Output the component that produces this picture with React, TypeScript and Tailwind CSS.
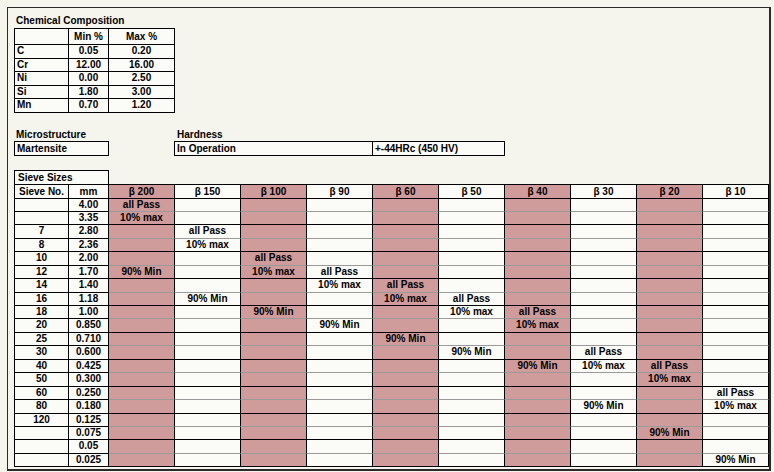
import React from 'react';

const betaCols = ['β 200', 'β 150', 'β 100', 'β 90', 'β 60', 'β 50', 'β 40', 'β 30', 'β 20', 'β 10'];

const sieveRows: [string, string][] = [
  ['', '4.00'], ['', '3.35'], ['7', '2.80'], ['8', '2.36'], ['10', '2.00'],
  ['12', '1.70'], ['14', '1.40'], ['16', '1.18'], ['18', '1.00'], ['20', '0.850'],
  ['25', '0.710'], ['30', '0.600'], ['40', '0.425'], ['50', '0.300'], ['60', '0.250'],
  ['80', '0.180'], ['120', '0.125'], ['', '0.075'], ['', '0.05'], ['', '0.025'],
];

// [allPass row, 10% max row, 90% min row] for each beta column
const passRows: [number, number, number][] = [
  [0, 1, 5], [2, 3, 7], [4, 5, 8], [5, 6, 9], [6, 7, 10],
  [7, 8, 11], [8, 9, 12], [11, 12, 15], [12, 13, 17], [14, 15, 19],
];

const composition = [
  ['C', '0.05', '0.20'],
  ['Cr', '12.00', '16.00'],
  ['Ni', '0.00', '2.50'],
  ['Si', '1.80', '3.00'],
  ['Mn', '0.70', '1.20'],
];

function cellText(col: number, row: number) {
  const [a, b, c] = passRows[col];
  if (row === a) return 'all Pass';
  if (row === b) return '10% max';
  if (row === c) return '90% Min';
  return '';
}

export default function App() {
  return (
    <div className="w-[774px] h-[472px] overflow-hidden bg-[#f5f5ee] font-['Liberation_Sans',Arial,sans-serif] text-[10px] font-bold text-black">
      <div className="ml-[7px] mt-[7px] w-[764px] h-[464px] border-l border-t border-r-2 border-b-2 border-[#2a2a2a] pl-[6px] pt-[6px]">
        {/* Chemical composition */}
        <div className="h-[14px] leading-[14px] pl-[2px]">Chemical Composition</div>
        <div className="w-[161px] border-l border-t border-black">
          <div className="flex h-[16px] border-b border-black">
            <div className="w-[54px] border-r border-black bg-[#fbfbf8]" />
            <div className="w-[40px] border-r border-black bg-[#fbfbf8] text-center leading-[15px]">Min %</div>
            <div className="w-[66px] border-r border-black bg-[#fbfbf8] text-center leading-[15px]">Max %</div>
          </div>
          {composition.map(([el, min, max]) => (
            <div key={el} className="flex h-[13.5px] border-b border-black leading-[12.5px]">
              <div className="w-[54px] border-r border-black bg-[#fbfbf8] pl-[2px]">{el}</div>
              <div className="w-[40px] border-r border-black bg-[#fbfbf8] text-center">{min}</div>
              <div className="w-[66px] border-r border-black bg-[#fbfbf8] text-center">{max}</div>
            </div>
          ))}
        </div>

        {/* Microstructure / hardness */}
        <div className="flex mt-[15px]">
          <div className="w-[160px] h-[13px] leading-[13px] pl-[2px]">Microstructure</div>
          <div className="h-[13px] leading-[13px] pl-[3px]">Hardness</div>
        </div>
        <div className="flex">
          <div className="w-[95px] h-[15px] border border-black bg-[#fbfbf8] pl-[2px] leading-[13px]">Martensite</div>
          <div className="ml-[65px] flex h-[15px] border border-black bg-[#fbfbf8] leading-[13px]">
            <div className="w-[198px] border-r border-black pl-[2px]">In Operation</div>
            <div className="w-[131px] pl-[2px]">+-44HRc (450 HV)</div>
          </div>
        </div>

        {/* Sieve sizes */}
        <div className="mt-[14px] w-[95px] h-[14px] border-l border-t border-r border-black bg-[#fbfbf8] pl-[3px] leading-[13px]">Sieve Sizes</div>
        <div className="w-[755px] border-l border-t border-black">
          <div className="flex h-[14px] border-b border-black leading-[13px]">
            <div className="w-[54px] border-r border-black bg-[#fbfbf8] text-center">Sieve No.</div>
            <div className="w-[40px] border-r border-black bg-[#fbfbf8] text-center">mm</div>
            {betaCols.map((b, i) => (
              <div
                key={b}
                className={`w-[66px] border-r border-black text-center ${i % 2 === 0 ? 'bg-[#cf9b9b]' : 'bg-[#fbfbf8]'}`}
              >
                {b}
              </div>
            ))}
          </div>
          {sieveRows.map(([no, mm], r) => (
            <div key={mm} className="flex h-[13.45px] leading-[12.5px]">
              <div className="w-[54px] border-r border-b border-black bg-[#fbfbf8] text-center">{no}</div>
              <div className="w-[40px] border-r border-b border-black bg-[#fbfbf8] text-center">{mm}</div>
              {betaCols.map((b, i) => (
                <div
                  key={b}
                  className={`w-[66px] border-r border-b border-r-black text-center ${
                    r % 2 === 1 || r === sieveRows.length - 1 ? 'border-b-black' : 'border-b-[#9a9a9a]'
                  } ${i % 2 === 0 ? 'bg-[#cf9b9b]' : 'bg-[#fbfbf8]'}`}
                >
                  {cellText(i, r)}
                </div>
              ))}
            </div>
          ))}
        </div>
      </div>
    </div>
  );
}
